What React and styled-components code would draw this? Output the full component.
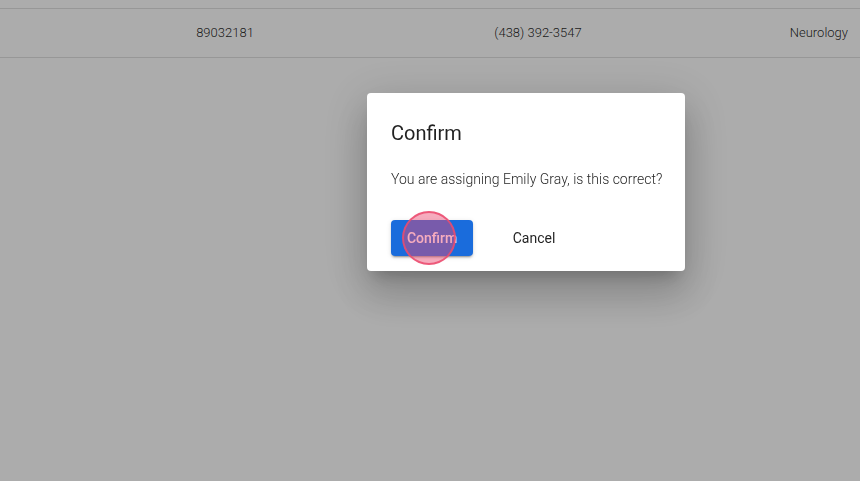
import React from "react";
import styled, { createGlobalStyle } from "styled-components";

const GlobalStyle = createGlobalStyle`
  html, body {
    margin: 0;
    padding: 0;
    background: #ffffff;
    font-family: Roboto, "Liberation Sans", sans-serif;
  }
`;

const Page = styled.div`
  width: 860px;
  height: 481px;
  overflow: hidden;
  padding-top: 8px;
  box-sizing: border-box;
`;

const Row = styled.div`
  display: grid;
  grid-template-columns: 450px 176px 1fr;
  height: 48px;
  align-items: center;
  border-top: 1px solid #e0e0e0;
  border-bottom: 1px solid #e0e0e0;
  font-size: 13px;
  font-weight: 300;
  color: rgba(0, 0, 0, 0.87);
`;

const Cell = styled.div`
  text-align: ${(p) => p.align || "center"};
  padding-right: ${(p) => (p.align === "right" ? "12px" : "0")};
  margin-top: -1px;
`;

const Backdrop = styled.div`
  position: fixed;
  inset: 0;
  background: rgba(0, 0, 0, 0.325);
  display: flex;
  justify-content: flex-start;
  align-items: flex-start;
  padding: 93px 0 0 367px;
`;

const Dialog = styled.div`
  width: 318px;
  height: 178px;
  box-sizing: border-box;
  background: #fff;
  border-radius: 4px;
  box-shadow: 0 11px 15px -7px rgba(0, 0, 0, 0.2),
    0 24px 38px 3px rgba(0, 0, 0, 0.14), 0 9px 46px 8px rgba(0, 0, 0, 0.12);
  padding: 24px 24px 15px;
  display: flex;
  flex-direction: column;
`;

const Title = styled.h2`
  margin: 0;
  font-size: 20px;
  font-weight: 400;
  line-height: 32px;
  color: rgba(0, 0, 0, 0.87);
`;

const Message = styled.p`
  margin: 20px 0 0;
  font-size: 14px;
  font-weight: 300;
  line-height: 20px;
  white-space: nowrap;
  color: rgba(0, 0, 0, 0.87);
`;

const Actions = styled.div`
  margin-top: auto;
  display: flex;
  gap: 20px;
`;

const Button = styled.button`
  position: relative;
  width: 82px;
  height: 36px;
  border: none;
  border-radius: 4px;
  font-family: inherit;
  font-size: 14px;
  font-weight: ${(p) => (p.primary ? 500 : 400)};
  background: ${(p) => (p.primary ? "#1a6cdc" : "transparent")};
  color: ${(p) => (p.primary ? "#fff" : "rgba(0,0,0,0.87)")};
  box-shadow: ${(p) =>
    p.primary
      ? "0 3px 1px -2px rgba(0,0,0,0.2), 0 2px 2px 0 rgba(0,0,0,0.14), 0 1px 5px 0 rgba(0,0,0,0.12)"
      : "none"};
  cursor: pointer;
`;

const ClickMark = styled.span`
  position: absolute;
  left: 11px;
  top: -9px;
  width: 50px;
  height: 50px;
  border-radius: 50%;
  background: rgba(235, 70, 110, 0.45);
  border: 2px solid rgba(235, 75, 110, 0.85);
  pointer-events: none;
`;

export default function App() {
  return (
    <>
      <GlobalStyle />
      <Page>
        <Row>
          <Cell>89032181</Cell>
          <Cell>(438) 392-3547</Cell>
          <Cell align="right">Neurology</Cell>
        </Row>
      </Page>
      <Backdrop>
        <Dialog>
          <Title>Confirm</Title>
          <Message>You are assigning Emily Gray, is this correct?</Message>
          <Actions>
            <Button primary>
              Confirm
              <ClickMark />
            </Button>
            <Button>Cancel</Button>
          </Actions>
        </Dialog>
      </Backdrop>
    </>
  );
}
